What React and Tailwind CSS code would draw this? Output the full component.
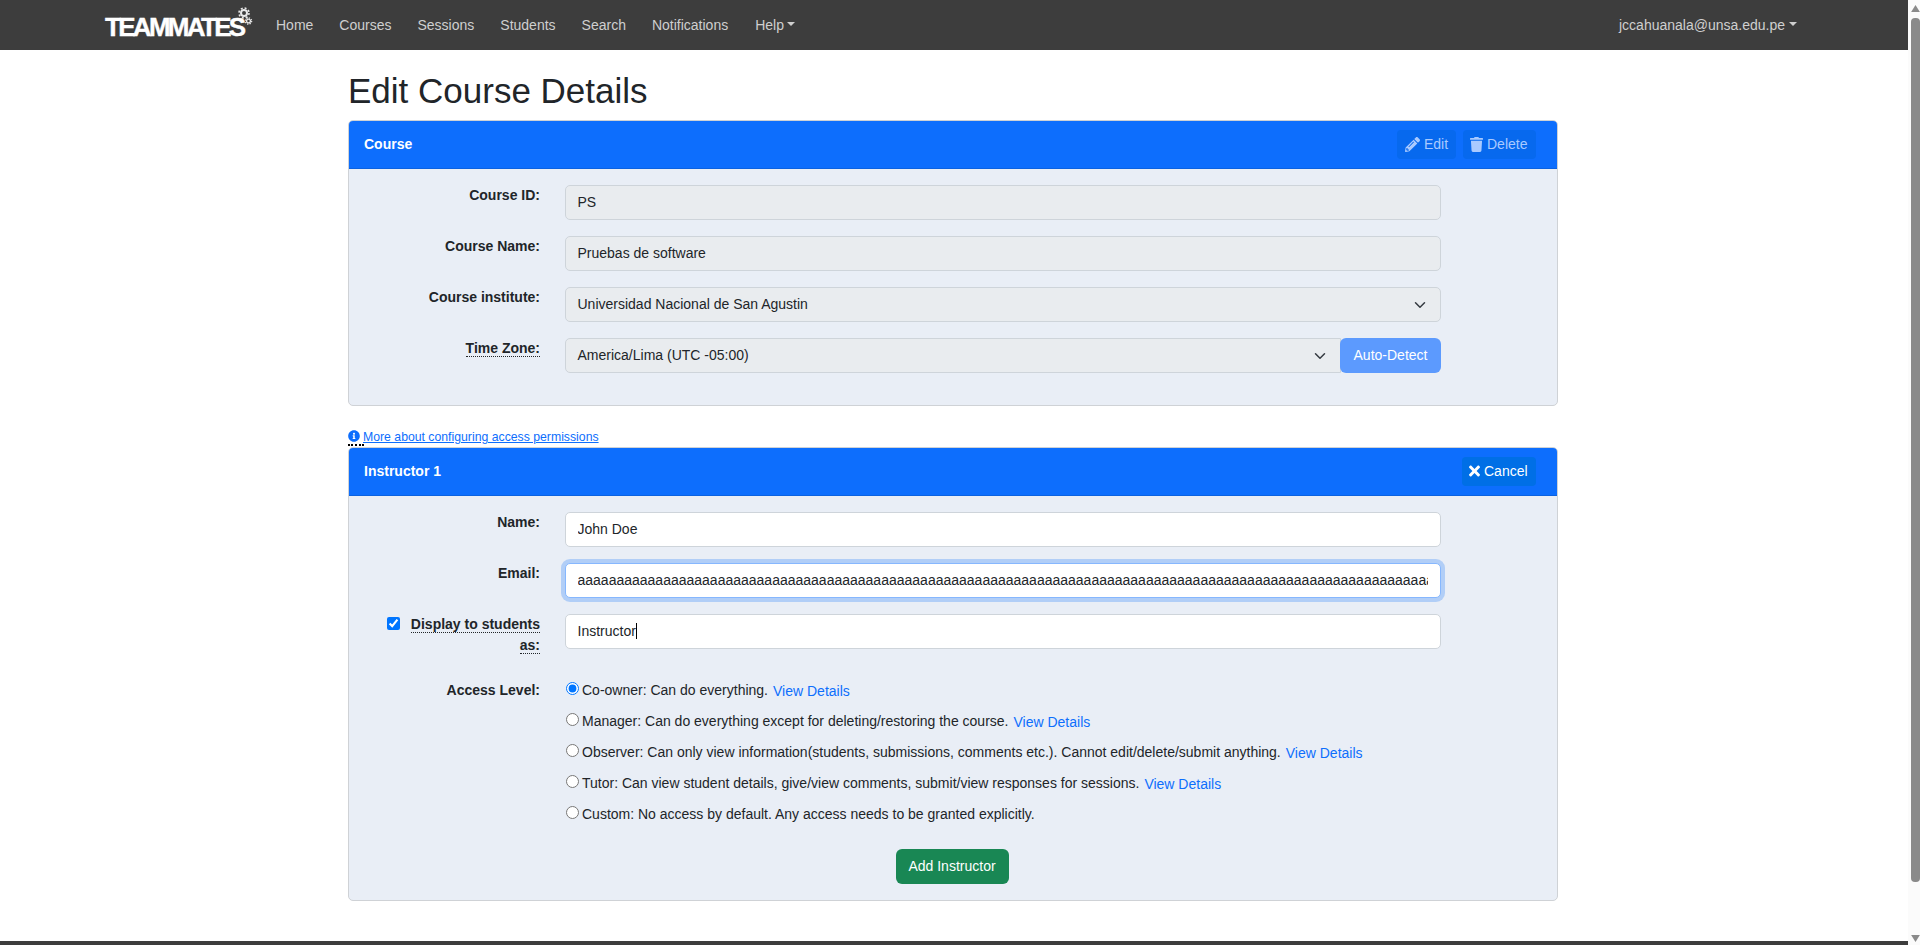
import React from "react";
import { FaPencilAlt, FaTrash, FaTimes, FaInfoCircle } from "react-icons/fa";

const navItems = ["Home", "Courses", "Sessions", "Students", "Search", "Notifications"];

function Caret({ className = "" }) {
  return <span className={"inline-block w-0 h-0 border-x-[4px] border-x-transparent border-t-[4px] border-t-current " + className} />;
}

function Chevron({ className = "" }) {
  return (
    <svg viewBox="0 0 16 16" className={"w-[14px] h-3 " + className} fill="none" stroke="#343a40" strokeWidth="2" strokeLinecap="round" strokeLinejoin="round">
      <path d="m2 5 6 6 6-6" />
    </svg>
  );
}

function Gears() {
  return (
    <svg viewBox="0 0 20 24" className="absolute left-[131px] top-[-8px] w-[20px] h-[24px]" fill="none" stroke="#e8e8e8">
      <circle cx="8" cy="7" r="3" strokeWidth="2" />
      <circle cx="8" cy="7" r="5" strokeWidth="1.6" strokeDasharray="2 1.93" />
      <circle cx="12.5" cy="15" r="1.9" strokeWidth="1.3" />
      <circle cx="12.5" cy="15" r="3.2" strokeWidth="1.2" strokeDasharray="1.3 1.2" />
    </svg>
  );
}

function Row({ label, children, tall }) {
  return (
    <div className={"flex " + (tall ? "mb-6" : "mb-4")}>
      <div className="w-[175px] shrink-0 text-right font-bold leading-[21px]">{label}</div>
      <div className="ml-[25px] w-[876px] min-h-[35px]">{children}</div>
    </div>
  );
}

const inputBase = "block w-full h-[35px] rounded-[5px] border pl-[11.5px] pr-3 pb-[2px] text-sm outline-none text-[#212529]";

function Card({ title, right, children }) {
  return (
    <section className="w-[1210px] rounded-[5px] border border-[#cfd2d6] bg-[#e9eef6] overflow-hidden">
      <header className="h-[48px] bg-[#0d6efd] flex items-center justify-between pl-[15px] pr-[21px] pb-px border-b border-[#0b62e0]">
        <span className="font-bold text-white">{title}</span>
        <div className="flex gap-[7px]">{right}</div>
      </header>
      <div className="p-4">{children}</div>
    </section>
  );
}

function DisabledBtn({ icon, children, w }) {
  return (
    <span className={"h-[29px] rounded-[4px] bg-[#0769ee] text-[#a9caff] flex items-center gap-[4px] " + w}>
      {icon}
      {children}
    </span>
  );
}

const levels = [
  ["Co-owner: Can do everything.", true],
  ["Manager: Can do everything except for deleting/restoring the course.", true],
  ["Observer: Can only view information(students, submissions, comments etc.). Cannot edit/delete/submit anything.", true],
  ["Tutor: Can view student details, give/view comments, submit/view responses for sessions.", true],
  ["Custom: No access by default. Any access needs to be granted explicitly.", false],
];

export default function App() {
  return (
    <div className="flex h-[945px] overflow-hidden bg-white text-sm text-[#212529] font-['Liberation_Sans',Arial,sans-serif]">
      <div className="w-[1908px] shrink-0 flex flex-col">
        <nav className="h-[50px] shrink-0 bg-[#3d3d3d] flex items-center pl-[105px] pb-px text-[#cfcfcf]">
          <div className="relative w-[171px] h-[21px] flex items-center">
            <span className="mt-[4px] font-bold text-[26px] leading-none tracking-[-2.7px] text-white [-webkit-text-stroke:0.4px_white]">TEAMMATES</span>
            <Gears />
          </div>
          <div className="flex gap-[26px]">
            {navItems.map((n) => (
              <span key={n}>{n}</span>
            ))}
            <span className="flex items-center gap-[3px] ml-px">
              Help <Caret className="mb-[2px]" />
            </span>
          </div>
          <span className="ml-auto mr-[111px] flex items-center gap-[4px]">
            jccahuanala@unsa.edu.pe <Caret className="mb-[2px]" />
          </span>
        </nav>

        <main className="pl-[348px] flex-1">
          <h1 className="text-[35px] leading-[42px] mt-5 mb-2">Edit Course Details</h1>

          <Card
            title="Course"
            right={
              <>
                <DisabledBtn w="w-[59px] pl-[8px]" icon={<FaPencilAlt className="w-[15px] h-[15px]" />}>Edit</DisabledBtn>
                <DisabledBtn w="w-[73px] pl-[7px]" icon={<FaTrash className="w-[13px] h-[15px]" />}>Delete</DisabledBtn>
              </>
            }
          >
            <Row label="Course ID:">
              <input readOnly value="PS" className={inputBase + " bg-[#e9ecef] border-[#ced4da]"} />
            </Row>
            <Row label="Course Name:">
              <input readOnly value="Pruebas de software" className={inputBase + " bg-[#e9ecef] border-[#ced4da]"} />
            </Row>
            <Row label="Course institute:">
              <div className={inputBase + " bg-[#e9ecef] border-[#ced4da] flex items-center justify-between !pr-[13px]"}>
                <span>Universidad Nacional de San Agustin</span>
                <Chevron className="mt-[2px]" />
              </div>
            </Row>
            <Row label={<span className="border-b border-dotted border-[#212529]">Time Zone:</span>}>
              <div className="flex">
                <div className="h-[35px] flex-1 rounded-l-[5px] border border-[#ced4da] bg-[#e9ecef] flex items-center justify-between pl-[11.5px] pr-[13px] pb-[2px]">
                  <span>America/Lima (UTC -05:00)</span>
                  <Chevron className="mt-[2px]" />
                </div>
                <button className="h-[35px] w-[101px] rounded-[6px] bg-[#5c9afe] text-white -ml-px pb-px">Auto-Detect</button>
              </div>
            </Row>
          </Card>

          <div className="mt-[22px] mb-px h-[18px] flex text-[12.25px] leading-[18px] text-[#0d6efd]">
            <span className="h-[18px] w-[16px] flex items-center border-b-[2px] border-dotted border-black">
              <FaInfoCircle className="w-3 h-3" />
            </span>
            <a className="underline -ml-px">More about configuring access permissions</a>
          </div>

          <Card
            title="Instructor 1"
            right={
              <span className="h-[29px] w-[74px] rounded-[4px] bg-[#006fe6] text-white flex items-center pl-[7px] gap-[4px]">
                <FaTimes className="w-[11px] h-4" />
                Cancel
              </span>
            }
          >
            <Row label="Name:">
              <input readOnly value="John Doe" className={inputBase + " bg-white border-[#ced4da]"} />
            </Row>
            <Row label="Email:">
              <input
                readOnly
                value={"a".repeat(180)}
                className={inputBase + " bg-white border-[#86b7fe] shadow-[0_0_0_4px_rgba(13,110,253,0.25)]"}
              />
            </Row>
            <Row
              tall
              label={
                <div className="relative">
                  <input type="checkbox" readOnly checked className="absolute left-[22px] top-[3px] w-[13px] h-[13px] m-0" />
                  <span className="border-b border-dotted border-[#212529]">Display to students</span>
                  <br />
                  <span className="border-b border-dotted border-[#212529]">as:</span>
                </div>
              }
            >
              <div className={inputBase + " bg-white border-[#ced4da] flex items-center"}>
                Instructor
                <span className="w-px h-[16px] bg-black" />
              </div>
            </Row>
            <div className="flex">
              <div className="w-[175px] shrink-0 text-right font-bold leading-[21px]">Access Level:</div>
              <div className="ml-[25px] -mt-px">
                {levels.map(([t, link], i) => (
                  <div key={t} className="flex items-center h-[21px] mb-[10px]">
                    <input type="radio" name="level" readOnly checked={i === 0} className="w-[13px] h-[13px] m-0 mb-[2px] mr-[3px] ml-px" />
                    <span>{t}</span>
                    {link && <a className="ml-[5px] text-[#0d6efd] mt-[2px]">View Details</a>}
                  </div>
                ))}
              </div>
            </div>
            <div className="flex justify-center pr-[2px] mt-[15px]">
              <button className="h-[35px] w-[113px] rounded-[6px] bg-[#198754] text-white pb-px">Add Instructor</button>
            </div>
          </Card>
        </main>
        <footer className="h-[4px] shrink-0 bg-[#3d3d3d]" />
      </div>

      <aside className="w-3 shrink-0 bg-[#fbfbfb] flex flex-col items-end">
        <svg viewBox="0 0 10 8" className="w-[9px] h-[7px] mt-[5px] mb-[6px] fill-[#8a8a8a]"><path d="M5 0 10 8H0z" /></svg>
        <div className="w-[9px] h-[864px] rounded-[4px] bg-[#8a8a8a]" />
        <div className="flex-1" />
        <svg viewBox="0 0 10 8" className="w-[9px] h-[7px] mb-[3px] fill-[#8a8a8a]"><path d="M0 0H10L5 8z" /></svg>
      </aside>
    </div>
  );
}
